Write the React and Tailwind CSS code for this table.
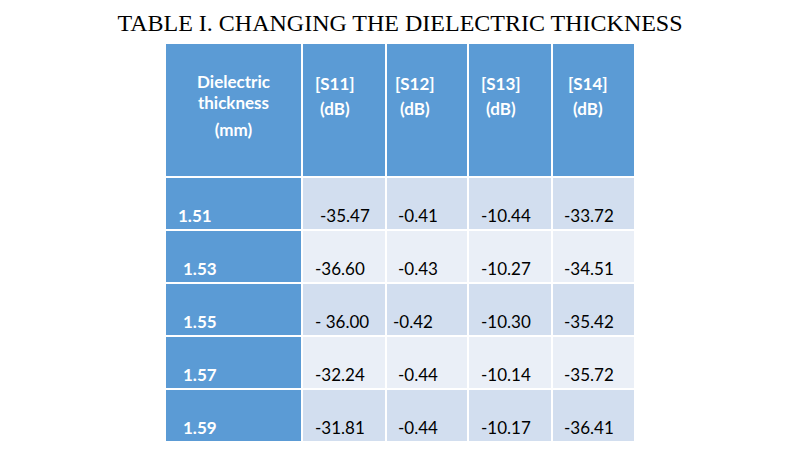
const header = [
  { lines: ["[S11]", "(dB)"], pl: "pl-[12px]" },
  { lines: ["[S12]", "(dB)"], pl: "pl-[8px]" },
  { lines: ["[S13]", "(dB)"], pl: "pl-[12px]" },
  { lines: ["[S14]", "(dB)"], pl: "pl-[15px]" },
];

const rows = [
  { t: "1.51", tp: "pl-[12px]", v: ["-35.47", "-0.41", "-10.44", "-33.72"], p: ["pl-[17px]", "pl-[11px]", "pl-[12px]", "pl-[11px]"] },
  { t: "1.53", tp: "pl-[17px]", v: ["-36.60", "-0.43", "-10.27", "-34.51"], p: ["pl-[12px]", "pl-[11px]", "pl-[12px]", "pl-[11px]"] },
  { t: "1.55", tp: "pl-[17px]", v: ["- 36.00", "-0.42", "-10.30", "-35.42"], p: ["pl-[12px]", "pl-[6px]", "pl-[12px]", "pl-[11px]"] },
  { t: "1.57", tp: "pl-[17px]", v: ["-32.24", "-0.44", "-10.14", "-35.72"], p: ["pl-[12px]", "pl-[11px]", "pl-[12px]", "pl-[11px]"] },
  { t: "1.59", tp: "pl-[17px]", v: ["-31.81", "-0.44", "-10.17", "-36.41"], p: ["pl-[12px]", "pl-[11px]", "pl-[12px]", "pl-[11px]"] },
];

const App = () => {
  return (
    <div className="w-[800px] h-[450px] bg-white flex flex-col items-center">
      {/* title */}
      <h1 className="pt-[9px] text-[24px] leading-[28px] text-black font-['Liberation_Serif',serif]">
        TABLE I. CHANGING THE DIELECTRIC THICKNESS
      </h1>

      <div className="mt-[7px] grid grid-cols-[135px_82px_80px_82px_81px] grid-rows-[132px_51px_51px_51px_51px_51px] gap-[2px] bg-white font-['Lato','Open_Sans',sans-serif] text-[17px]">
        <div className="bg-[#5b9bd5] text-white font-bold text-center pt-[27px] leading-[21px]">
          <div>Dielectric</div>
          <div>thickness</div>
          <div className="mt-[6px]">(mm)</div>
        </div>
        {header.map((h, i) => (
          <div key={i} className={`bg-[#5b9bd5] text-white font-bold pt-[27px] leading-[25px] ${h.pl}`}>
            <div className="inline-block text-center">
              <div>{h.lines[0]}</div>
              <div>{h.lines[1]}</div>
            </div>
          </div>
        ))}

        {rows.map((r, i) => {
          const band = i % 2 === 0 ? "bg-[#d2deef]" : "bg-[#eaeff7]";
          return [
            <div key={`t${i}`} className={`bg-[#5b9bd5] text-white font-bold flex items-end pb-[3px] leading-5 ${r.tp}`}>
              {r.t}
            </div>,
            ...r.v.map((v, j) => (
              <div key={`v${i}${j}`} className={`${band} text-black flex items-end pb-[3px] leading-5 whitespace-pre ${r.p[j]}`}>
                {v}
              </div>
            )),
          ];
        })}
      </div>
    </div>
  );
};

export default App;
